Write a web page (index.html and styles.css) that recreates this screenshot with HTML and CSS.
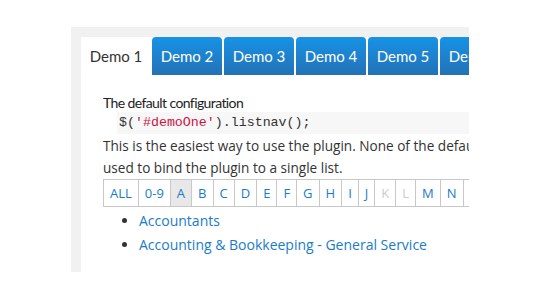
FILE: index.html
```html
<!DOCTYPE html>
<html>
<head>
<meta charset="utf-8">
<link rel="stylesheet" href="styles.css">
</head>
<body>
<div class="frame">
  <div class="panel">
    <div class="tabs">
      <div class="tab active">Demo 1</div>
      <div class="tab">Demo 2</div>
      <div class="tab">Demo 3</div>
      <div class="tab">Demo 4</div>
      <div class="tab">Demo 5</div>
      <div class="tab">Demo 6</div>
    </div>
    <div class="content">
      <div class="heading">The default configuration</div>
      <div class="code">$(<span class="str">'#demoOne'</span>).listnav();</div>
      <p class="desc">This is the easiest way to use the plugin. None of the default options are changed and it is<br>used to bind the plugin to a single list.</p>
      <div class="letters">
        <a class="letter">ALL</a>
        <a class="letter">0-9</a>
        <a class="letter sel">A</a>
        <a class="letter">B</a>
        <a class="letter">C</a>
        <a class="letter">D</a>
        <a class="letter">E</a>
        <a class="letter">F</a>
        <a class="letter">G</a>
        <a class="letter">H</a>
        <a class="letter">I</a>
        <a class="letter">J</a>
        <a class="letter off">K</a>
        <a class="letter off">L</a>
        <a class="letter">M</a>
        <a class="letter">N</a>
        <a class="letter off">O</a>
        <a class="letter">P</a>
      </div>
      <ul class="items">
        <li><a>Accountants</a></li>
        <li><a>Accounting &amp; Bookkeeping - General Service</a></li>
      </ul>
    </div>
  </div>
</div>
</body>
</html>
```
FILE: styles.css
```css
html, body {
  margin: 0;
  padding: 0;
  background: #fff;
}
.frame {
  margin: 27px 0 0 71px;
  width: 398px;
  height: 245px;
  box-sizing: border-box;
  padding: 10px 0 0 10px;
  background: #f1f1f1;
  overflow: hidden;
}
.panel {
  width: 700px;
  height: 100%;
  background: #fff;
}
.tabs {
  display: flex;
  gap: 2px;
  height: 38px;
}
.tab {
  width: 70px;
  height: 38px;
  box-sizing: border-box;
  display: flex;
  align-items: center;
  justify-content: center;
  border-radius: 4px 4px 0 0;
  background: linear-gradient(#1792e6, #2372b6);
  color: #fff;
  font-family: Lato, sans-serif;
  font-size: 15px;
}
.tab.active {
  background: #fff;
  color: #333;
  margin-right: -1px;
}
.content {
  padding: 19px 0 0 22px;
  font-family: "Open Sans", sans-serif;
  color: #333;
}
.heading {
  font-family: Lato, sans-serif;
  font-size: 14px;
  letter-spacing: -0.6px;
  line-height: 18px;
  color: #222;
}
.code {
  margin: 0 0 0 14px;
  padding-left: 2px;
  height: 22px;
  line-height: 22px;
  background: #f7f7f7;
  font-family: "Liberation Mono", monospace;
  font-size: 13.3px;
  color: #333;
}
.str {
  color: #d01040;
}
.desc {
  margin: 1px 0 0;
  font-size: 13.6px;
  line-height: 22px;
  color: #333;
}
.letters {
  display: flex;
  height: 28px;
  box-sizing: border-box;
  border: 1px solid #c8c8c8;
  border-right: none;
  width: max-content;
}
.letter {
  display: flex;
  align-items: center;
  padding: 0 6px;
  border-right: 1px solid #c8c8c8;
  font-size: 13px;
  color: #1a7cc8;
}
.letter.sel {
  background: #e8e8e8;
}
.letter.off {
  color: #cccccc;
}
.items {
  margin: 2px 0 0;
  padding-left: 36px;
  font-size: 14px;
  line-height: 24px;
}
.items li {
  color: #333;
}
.items a {
  color: #1a7cc8;
}
```
